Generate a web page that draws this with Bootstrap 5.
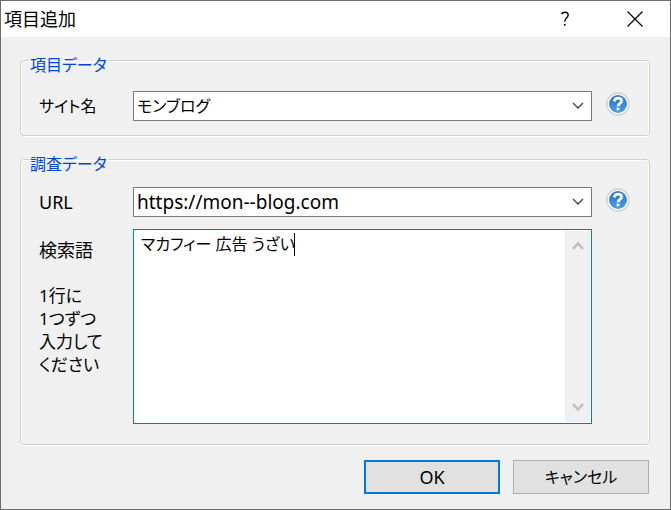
<!DOCTYPE html>
<html lang="ja">
<head>
<meta charset="utf-8">
<meta name="viewport" content="width=device-width, initial-scale=1">
<title>項目追加</title>
<link rel="stylesheet" href="https://cdn.jsdelivr.net/npm/bootstrap@5.3.0/dist/css/bootstrap.min.css">
<style>
body { font: 18px/23px "Noto Sans", "Noto Sans CJK JP", sans-serif; color: #000; background: #f0f0f0; }
body, select, textarea, button { font-feature-settings: "palt"; }
.dialog { border: 1px solid #6b6b6b; }
.titlebar { height: 36px; padding-left: 3px; }
.titlebar h1 { font-size: 18px; line-height: 24px; font-weight: 400; }
.titlebar button { width: 70px; height: 36px; }
.dialog-body { padding: 8px 20px 15px 19px; }
.group { border: 1px solid #d0d0bf; border-radius: 4px; box-shadow: inset 1px 1px 0 #fff, inset -1px 0 0 #fff, 0 1px 0 #fff; padding: 0 19px 14px 18px; margin-bottom: 8px; }
.group legend { font-size: 16px; line-height: 20px; color: #0046d5; padding: 10px 1px 0; margin-left: -10px; }
.group-search { padding-bottom: 20px; margin-bottom: 15px; }
.url-row { padding: 13px 0 12px; }
.field-label { width: 94px; }
.kana { font-size: 16px; }
.combo { height: 30px; border: 1px solid #7a7a7a; border-radius: 0; padding: 0 30px 0 3px; font-size: 16px; line-height: 26px; color: #000; background: #fff url("data:image/svg+xml,%3Csvg xmlns='http://www.w3.org/2000/svg' viewBox='0 0 12 8'%3E%3Cpath d='M1 1l5 5 5-5' fill='none' stroke='%23404040' stroke-width='1.3'/%3E%3C/svg%3E") no-repeat right 7px center / 12px 8px; }
.combo-latin { font-size: 19px; }
.field-gap { gap: 14px; }
.help { width: 24px; height: 24px; margin-bottom: 4px; }
.words { height: 195px; margin-right: 38px; border: 1px solid #0078d7; background: #fff; }
.words textarea { resize: none; outline: 0; padding: 2px 0 0 7px; font-size: 16px; line-height: 24px; overflow: hidden; color: #000; }
.caret { left: 160px; top: 3px; width: 1px; height: 23px; background: #000; }
.scroller { width: 25px; margin: 1px 1px 1px 0; background: #f0f0f0; padding: 10px 0; }
.words-label { padding-top: 10px; }
.hint { margin-top: 22px; font-size: 17px; }
.actions { gap: 13px; padding-right: 1px; }
.push { width: 136px; height: 34px; border: 1px solid #adadad; border-radius: 0; background: #e1e1e1; font-size: 16px; line-height: 24px; color: #000; }
.push-default { border: 2px solid #0078d7; font-size: 18px; }
</style>
<script src="https://cdn.jsdelivr.net/npm/bootstrap@5.3.0/dist/js/bootstrap.bundle.min.js"></script>
</head>
<body>
<svg width="0" height="0" class="position-absolute" aria-hidden="true">
  <defs>
    <linearGradient id="blue" x1="0" y1="0" x2="0" y2="1"><stop offset="0" stop-color="#2b72c0"/><stop offset="1" stop-color="#4aa0ea"/></linearGradient>
    <symbol id="help-icon" viewBox="0 0 24 24">
      <circle cx="12" cy="12" r="11" fill="#fff" stroke="#cfcfcf" stroke-width="1.3"/>
      <circle cx="12" cy="12" r="9" fill="url(#blue)"/>
      <path d="M8.4 9.4C8.5 7.2 9.900 6.200 12 6.200c2.200 0 3.700 1.100 3.700 2.900C15.700 11.400 12 11.400 12 14.200" fill="none" stroke="#fff" stroke-width="2.800"/>
      <rect x="10.600" y="15.600" width="2.800" height="2.600" fill="#fff"/>
    </symbol>
  </defs>
</svg>
<main class="dialog min-vh-100">
  <header class="titlebar d-flex align-items-center bg-white">
    <h1 class="m-0 me-auto">項目追加</h1>
    <button type="button" class="btn p-0 border-0 rounded-0 d-flex align-items-center justify-content-center" aria-label="ヘルプ">
      <svg width="10" height="16" viewBox="0 0 10 16" fill="none" stroke="#000" stroke-width="1.400"><path d="M1.500 3.200C2.300 1.700 3.500 1.200 4.800 1.200c2 0 3.400 1.100 3.400 2.900C8.200 6.800 4.700 7 4.700 10.800"/><path d="M3.900 13.800h1.700" stroke-width="1.800"/></svg>
    </button>
    <button type="button" class="btn p-0 border-0 rounded-0 d-flex align-items-center justify-content-center" aria-label="閉じる">
      <svg width="16" height="16" viewBox="0 0 16 16" stroke="#000" stroke-width="1.200"><path d="M.5.5l15 15M15.500.5l-15 15"/></svg>
    </button>
  </header>
  <form class="dialog-body">
    <fieldset class="group">
      <legend class="float-none w-auto mb-0">項目データ</legend>
      <div class="d-flex align-items-center pt-3">
        <label class="field-label kana flex-shrink-0" for="site">サイト名</label>
        <div class="d-flex align-items-center flex-grow-1 field-gap">
          <select id="site" class="form-select combo"><option>モンブログ</option></select>
          <button type="button" class="btn p-0 border-0 help d-flex flex-shrink-0" aria-label="サイト名のヘルプ"><svg width="24" height="24"><use href="#help-icon"/></svg></button>
        </div>
      </div>
    </fieldset>
    <fieldset class="group group-search">
      <legend class="float-none w-auto mb-0">調査データ</legend>
      <div class="url-row d-flex align-items-center">
        <label class="field-label flex-shrink-0" for="url">URL</label>
        <div class="d-flex align-items-center flex-grow-1 field-gap">
          <select id="url" class="form-select combo combo-latin"><option>https://mon--blog.com</option></select>
          <button type="button" class="btn p-0 border-0 help d-flex flex-shrink-0" aria-label="URLのヘルプ"><svg width="24" height="24"><use href="#help-icon"/></svg></button>
        </div>
      </div>
      <div class="d-flex">
        <div class="field-label words-label flex-shrink-0">
          <label for="words">検索語</label>
          <p class="hint mb-0" id="hint">1行に<br>1つずつ<br>入力して<br>ください</p>
        </div>
        <div class="words d-flex flex-grow-1 position-relative">
          <textarea id="words" class="flex-grow-1 border-0 bg-white" aria-describedby="hint" spellcheck="false">マカフィー 広告 うざい</textarea>
          <span class="caret position-absolute"></span>
          <div class="scroller d-flex flex-column justify-content-between align-items-center" aria-hidden="true">
            <svg width="12" height="10" viewBox="0 0 12 10" fill="none" stroke="#bfbfbf" stroke-width="2.600"><path d="M1 8l5-5.500L11 8"/></svg>
            <svg width="12" height="10" viewBox="0 0 12 10" fill="none" stroke="#bfbfbf" stroke-width="2.600"><path d="M1 2l5 5.500L11 2"/></svg>
          </div>
        </div>
      </div>
    </fieldset>
    <div class="actions d-flex justify-content-end">
      <button type="submit" class="btn p-0 push push-default">OK</button>
      <button type="button" class="btn p-0 push">キャンセル</button>
    </div>
  </form>
</main>
</body>
</html>
